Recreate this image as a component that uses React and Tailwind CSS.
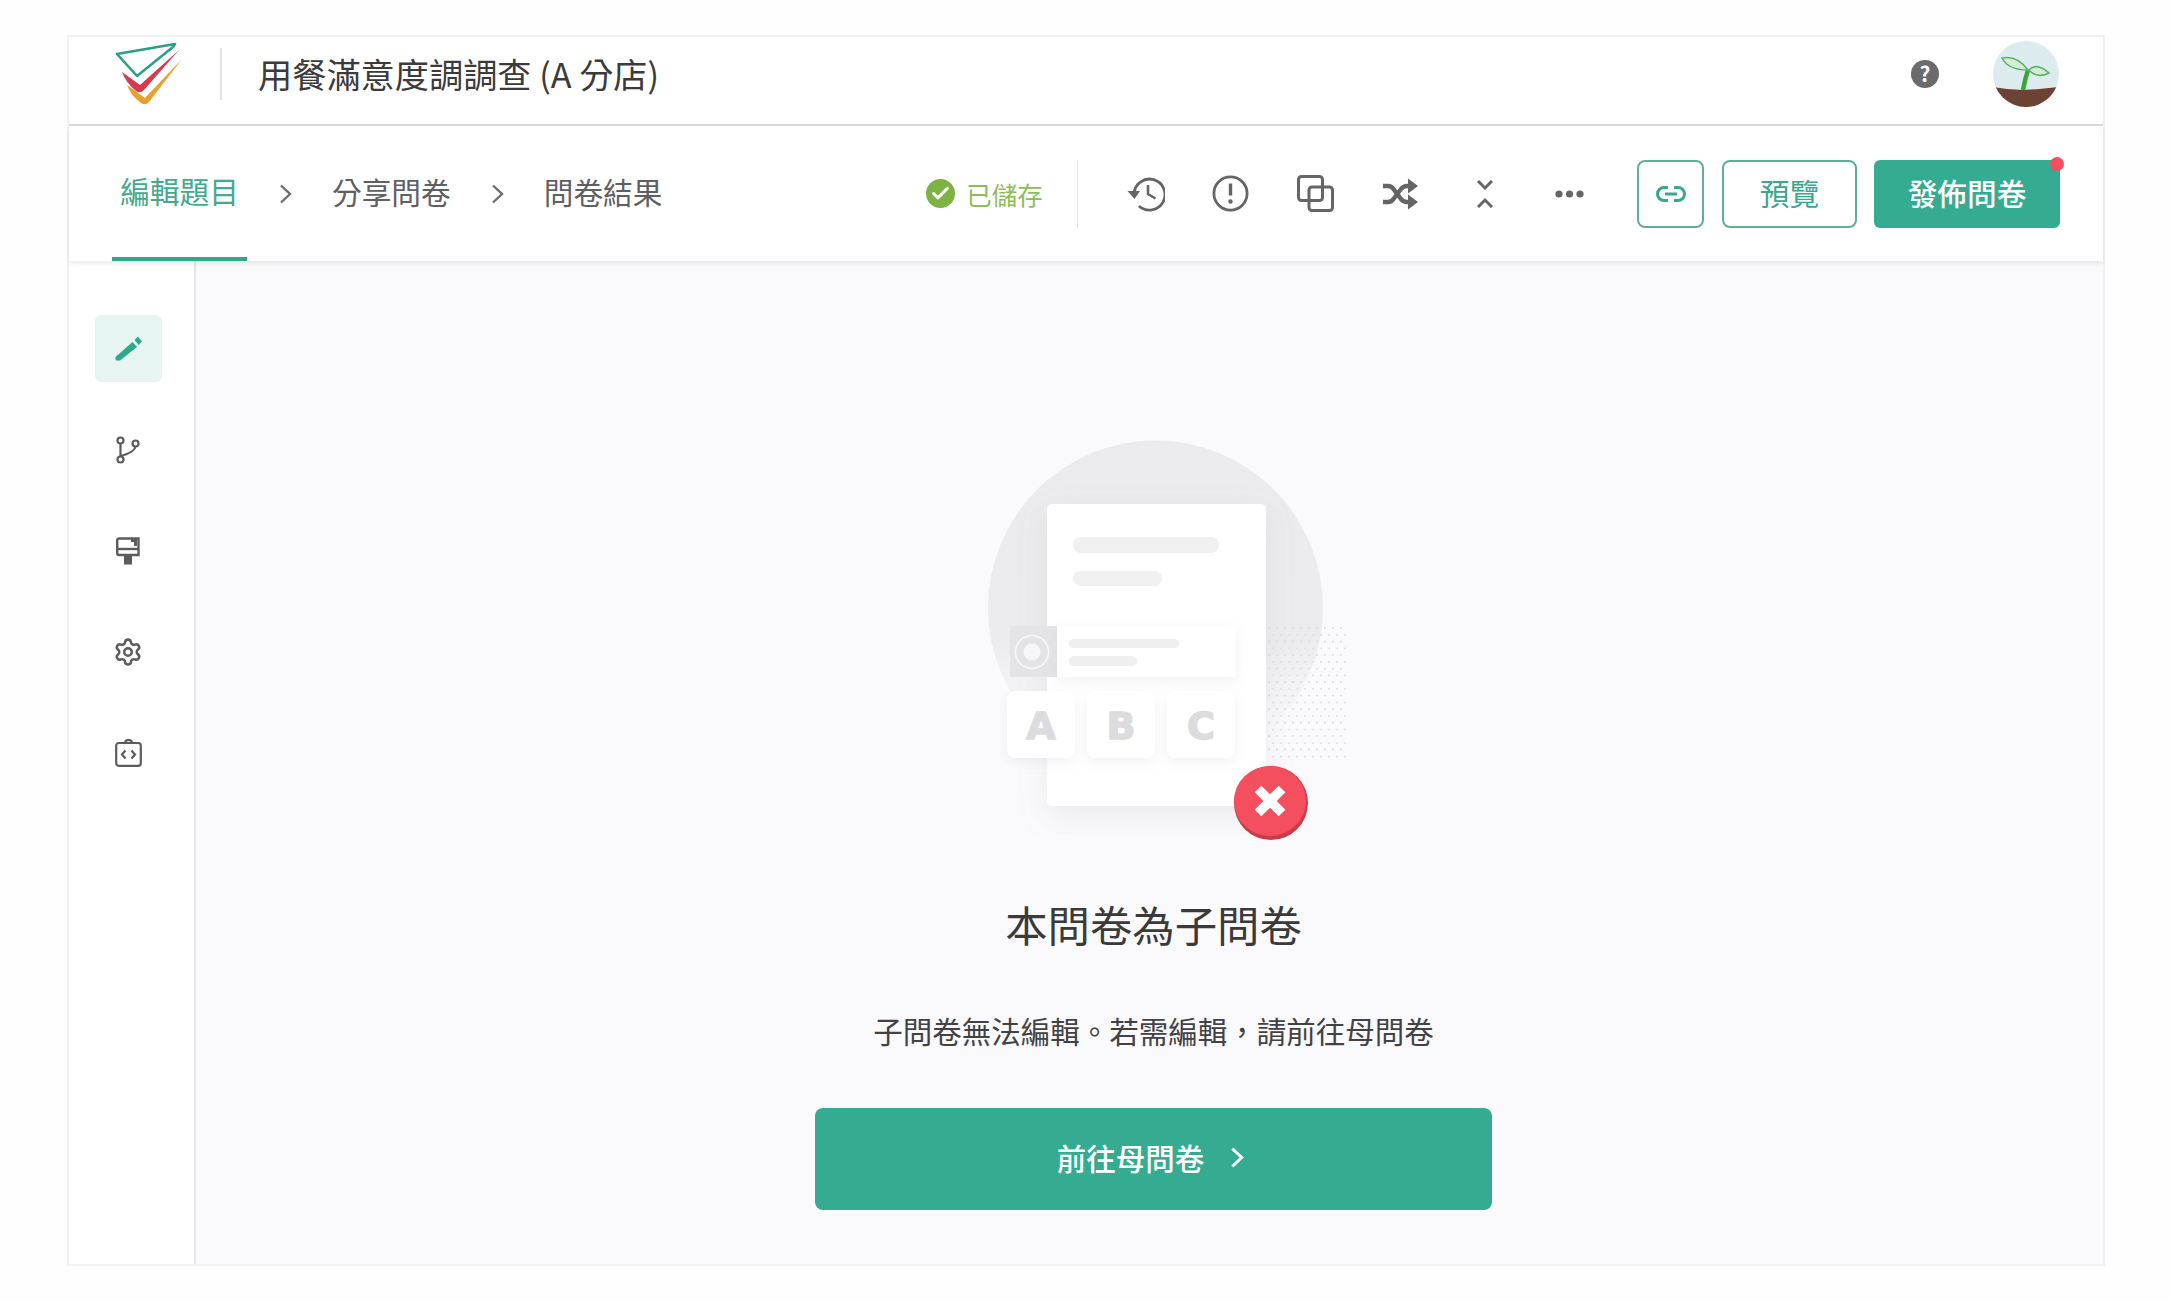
import React from "react";
import { Settings, Check } from "lucide-react";

const FONT = { fontFamily: '"Noto Sans CJK TC","Noto Sans",sans-serif' };

function Logo() {
  return (
    <svg width="67" height="62" viewBox="0 0 67 62" fill="none">
      <path d="M1 11 L59 1 L57 4 L21 33 Z" stroke="#2f9e87" strokeWidth="2.6" strokeLinejoin="round" />
      <path d="M6 29 L24 42 L63 7 L28 47 Q24 51 20 48 Q10 40 6 29Z" fill="#d8394f" />
      <path d="M11 42 L29 55 L66 16 L33 59 Q29 63 25 60 Q15 53 11 42Z" fill="#e8a02f" />
    </svg>
  );
}

function Avatar() {
  return (
    <svg width="66" height="66" viewBox="0 0 66 66">
      <defs>
        <clipPath id="av"><circle cx="33" cy="33" r="33" /></clipPath>
      </defs>
      <g clipPath="url(#av)">
        <rect width="66" height="66" fill="#dcecee" />
        <path d="M0 46 L14 48 L30 49 L46 48 L66 46 V66 H0Z" fill="#6b4233" />
        <path d="M30 49 Q32 38 35 29" stroke="#3ba53b" strokeWidth="4.5" fill="none" />
        <path d="M35 29 Q24 14 9 17 Q15 29 35 29Z" fill="#d4ebd6" stroke="#5eb36a" strokeWidth="1.6" />
        <path d="M36 29 Q44 21 56 32 Q44 38 36 29Z" fill="#d4ebd6" stroke="#5eb36a" strokeWidth="1.6" />
      </g>
    </svg>
  );
}

function Chevron({ color = "#6c6c6e", w = 13, h = 20, sw = 2.4 }) {
  return (
    <svg width={w} height={h} viewBox="0 0 13 20" fill="none" stroke={color} strokeWidth={sw}>
      <path d="M2 1.5 L11 10 L2 18.5" />
    </svg>
  );
}

function PencilIcon() {
  return (
    <svg width="27" height="25" viewBox="0 0 27 25" fill="#2fa88d">
      <path d="M0.5 21 L17.5 6 L22 11 L5 24.5 L1 24.5 Q0 24 0.5 21Z" />
      <path d="M19.5 4 L23 0.5 L27 5.5 L23.7 9Z" />
    </svg>
  );
}

function BranchIcon() {
  return (
    <svg width="24" height="28" viewBox="0 0 24 28" fill="none" stroke="#5c5c5e" strokeWidth="2.2">
      <circle cx="4.5" cy="4.5" r="3" />
      <circle cx="4.5" cy="23.5" r="3" />
      <circle cx="19.5" cy="7.5" r="3" />
      <path d="M4.5 7.5 V20.5 M19.5 10.5 Q19 16 5 20" />
    </svg>
  );
}

function RollerIcon() {
  return (
    <svg width="24" height="28" viewBox="0 0 24 28" fill="none" stroke="#5c5c5e" strokeWidth="2.4">
      <path d="M3 1.5 H22.5 V18 H3 Q1.2 18 1.2 16 V3.5 Q1.2 1.5 3 1.5Z" />
      <path d="M1.2 12 H22.5" />
      <path d="M15 2 H21 V9 H18 V5 H15Z" fill="#5c5c5e" stroke="none" />
      <rect x="8" y="18" width="8" height="9.5" fill="#5c5c5e" stroke="none" />
    </svg>
  );
}

function CodeBoardIcon() {
  return (
    <svg width="27" height="28" viewBox="0 0 27 28" fill="none" stroke="#5c5c5e" strokeWidth="2.2">
      <rect x="1.2" y="4" width="24.6" height="22.8" rx="2.5" />
      <path d="M10 4 Q10 1 13.5 1 Q17 1 17 4" />
      <path d="M10.5 11.5 L7 15.5 L10.5 19.5 M16.5 11.5 L20 15.5 L16.5 19.5" />
    </svg>
  );
}

const TOOL = "#656567";

function HistoryIcon() {
  return (
    <svg width="38" height="36" viewBox="0 0 38 36" fill="none" stroke={TOOL} strokeWidth="2.8">
      <path d="M7 18 A15.5 15.5 0 1 1 12 30" />
      <path d="M0.5 15 L13 15 L7.5 23Z" fill={TOOL} stroke="none" />
      <path d="M21 9 V18 L28.5 22.5" strokeWidth="2.6" />
    </svg>
  );
}

function AlertIcon() {
  return (
    <svg width="37" height="37" viewBox="0 0 37 37" fill="none" stroke={TOOL} strokeWidth="2.8">
      <circle cx="18.5" cy="18.5" r="16.6" />
      <path d="M18.5 8.5 V20.5" strokeWidth="3.4" />
      <circle cx="18.5" cy="26.5" r="2.2" fill={TOOL} stroke="none" />
    </svg>
  );
}

function CopyIcon() {
  return (
    <svg width="37" height="37" viewBox="0 0 37 37" fill="none" stroke={TOOL} strokeWidth="3">
      <rect x="1.5" y="1.5" width="24" height="24" rx="3" />
      <rect x="12" y="12" width="23.5" height="23.5" rx="3" />
    </svg>
  );
}

function ShuffleIcon() {
  return (
    <svg width="36" height="32" viewBox="0 0 36 32" fill="none" stroke={TOOL} strokeWidth="4.4">
      <path d="M1 8 H6 Q9.5 8 11.5 11 L19 21 Q21.5 24 25 24 H30" />
      <path d="M1 24 H6 Q9.5 24 11.5 21 L19 11 Q21.5 8 25 8 H30" />
      <path d="M26 0.5 L36 8 L26 15.5Z M26 16.5 L36 24 L26 31.5Z" fill={TOOL} stroke="none" />
    </svg>
  );
}

function CollapseIcon() {
  return (
    <svg width="16" height="28" viewBox="0 0 16 28" fill="none" stroke={TOOL} strokeWidth="3">
      <path d="M1 1 L8 8 L15 1 M1 27 L8 20 L15 27" />
    </svg>
  );
}

function DotsIcon() {
  return (
    <svg width="29" height="8" viewBox="0 0 29 8" fill={TOOL}>
      <circle cx="4" cy="4" r="3.6" />
      <circle cx="14.5" cy="4" r="3.6" />
      <circle cx="25" cy="4" r="3.6" />
    </svg>
  );
}

function LinkIcon() {
  return (
    <svg width="30" height="16" viewBox="0 0 30 16" fill="none" stroke="#3aa78f" strokeWidth="3">
      <path d="M12 1.5 H8 A6.5 6.5 0 0 0 8 14.5 H12 M18 1.5 H22 A6.5 6.5 0 0 1 22 14.5 H18 M9 8 H21" />
    </svg>
  );
}

function Illustration() {
  const dots = [];
  for (let y = 0; y < 10; y++) {
    for (let x = 0; x < 10; x++) {
      dots.push(<circle key={`${x}-${y}`} cx={291 + x * 8} cy={197 + y * 13.5} r="1.1" fill="#dcdce0" />);
      dots.push(<circle key={`b${x}-${y}`} cx={295 + x * 8} cy={204 + y * 13.5} r="1.1" fill="#e2e2e6" />);
    }
  }
  const letter = {
    fontFamily: '"DejaVu Sans",sans-serif',
    fontWeight: 700,
    fontSize: 38,
    fill: "#dcdcde",
    stroke: "#dcdcde",
    strokeWidth: 1.5,
    textAnchor: "middle",
  };
  return (
    <svg width="400" height="410" viewBox="0 0 400 410">
      <defs>
        <linearGradient id="disc" x1="0" y1="0" x2="0" y2="1">
          <stop offset="0" stopColor="#ebebed" />
          <stop offset="0.6" stopColor="#ececee" />
          <stop offset="0.85" stopColor="#f9f8fa" />
        </linearGradient>
        <filter id="soft" x="-30%" y="-30%" width="160%" height="170%">
          <feDropShadow dx="0" dy="10" stdDeviation="14" floodColor="#a0a0a8" floodOpacity="0.16" />
        </filter>
        <filter id="tile" x="-30%" y="-30%" width="160%" height="170%">
          <feDropShadow dx="0" dy="4" stdDeviation="6" floodColor="#a0a0a8" floodOpacity="0.14" />
        </filter>
      </defs>
      <circle cx="177.5" cy="177" r="167.5" fill="url(#disc)" />
      {dots}
      <rect x="69" y="73" width="219" height="302" rx="5" fill="#ffffff" filter="url(#soft)" />
      <rect x="95" y="106" width="146" height="16" rx="8" fill="#f0f0f1" />
      <rect x="95" y="140" width="89" height="15" rx="7.5" fill="#f0f0f1" />
      <rect x="32" y="195" width="47" height="51" fill="#e4e4e6" />
      <rect x="79" y="195" width="179" height="51" rx="3" fill="#ffffff" filter="url(#tile)" />
      <circle cx="54" cy="221" r="16.5" fill="none" stroke="#f7f7f8" strokeWidth="1.6" />
      <circle cx="54" cy="221" r="8.5" fill="#f7f7f8" />
      <rect x="91" y="208" width="110" height="9" rx="4.5" fill="#efeff0" />
      <rect x="91" y="225" width="68" height="10" rx="5" fill="#efeff0" />
      {[29, 109, 189].map((x, i) => (
        <g key={x}>
          <rect x={x} y="260" width="68" height="67" rx="8" fill="#ffffff" filter="url(#tile)" />
          <text x={x + 34} y="308" style={letter}>{"ABC"[i]}</text>
        </g>
      ))}
      <circle cx="293" cy="372" r="37" fill="#c93a4b" />
      <ellipse cx="292" cy="370" rx="36" ry="35" fill="#f44f5e" />
      <path d="M280 358 L304 382 M304 358 L280 382" stroke="#ffffff" strokeWidth="9.5" />
    </svg>
  );
}

const sideItems = [
  { key: "pencil", el: <PencilIcon />, active: true },
  { key: "branch", el: <BranchIcon /> },
  { key: "roller", el: <RollerIcon /> },
  { key: "gear", el: <Settings size={30} color="#5c5c5e" strokeWidth={2} /> },
  { key: "code", el: <CodeBoardIcon /> },
];

const toolIcons = [
  <HistoryIcon key="h" />,
  <AlertIcon key="a" />,
  <CopyIcon key="c" />,
  <ShuffleIcon key="s" />,
  <CollapseIcon key="x" />,
  <DotsIcon key="d" />,
];

export default function App() {
  return (
    <div style={FONT} className="w-[2172px] h-[1301px] bg-[#fefefe] pt-[35px] pl-[67px] overflow-hidden">
      <div className="w-[2038px] h-[1231px] flex flex-col border-2 border-[#f1f0f3] bg-white">
        <header className="h-[89px] shrink-0 flex items-center border-b-2 border-[#d9d9db] pb-[14px]">
          <div className="ml-[47px] w-[67px] h-[62px]">
            <Logo />
          </div>
          <div className="ml-[37px] w-[2px] h-[52px] bg-[#e4e4e6]" />
          <h1 className="ml-[36px] text-[34.2px] leading-none font-normal text-[#3b3b3b]">用餐滿意度調調查 (A 分店)</h1>
          <div className="ml-auto mr-[44px] flex items-center">
            <div className="w-[28px] h-[28px] rounded-full bg-[#6b6b6d] flex items-center justify-center text-white font-bold text-[21px] leading-none">?</div>
            <div className="ml-[54px] w-[66px] h-[66px]">
              <Avatar />
            </div>
          </div>
        </header>
        <nav className="h-[135px] shrink-0 flex items-stretch shadow-[0_3px_5px_rgba(0,0,0,0.08)] relative z-10">
          <div className="ml-[43px] w-[135px] flex items-center justify-center border-b-4 border-[#2fa88d] pb-[1px] text-[29.7px] text-[#45a98f]">編輯題目</div>
          <div className="ml-[32px] flex items-center">
            <Chevron />
          </div>
          <div className="ml-[40px] flex items-center pb-[2px] text-[29.7px] text-[#606062]">分享問卷</div>
          <div className="ml-[40px] flex items-center">
            <Chevron />
          </div>
          <div className="ml-[40px] flex items-center pb-[2px] text-[29.7px] text-[#606062]">問卷結果</div>

          <div className="ml-auto mr-[43px] flex items-center">
            <div className="w-[29px] h-[29px] rounded-full bg-[#7cb342] flex items-center justify-center">
              <Check size={21} color="#ffffff" strokeWidth={3.5} />
            </div>
            <span className="ml-[11px] text-[25.5px] leading-none text-[#8cbd5a]">已儲存</span>
            <div className="ml-[34px] w-[1.5px] h-[68px] bg-[#e4e4e6]" />
            <div className="ml-[25px] flex items-center">
              {toolIcons.map((ic, i) => (
                <div key={i} className="w-[84.8px] flex items-center justify-center">{ic}</div>
              ))}
            </div>
            <button className="ml-[25px] w-[67px] h-[68px] rounded-[8px] border-2 border-[#5fae9c] bg-white flex items-center justify-center">
              <LinkIcon />
            </button>
            <button className="ml-[18px] w-[135px] h-[68px] rounded-[8px] border-2 border-[#5fae9c] bg-white pb-[1px] text-[29.7px] text-[#3aa78f] flex items-center justify-center">預覽</button>
            <button className="relative ml-[17px] w-[186px] h-[68px] rounded-[6px] bg-[#35ab91] pb-[1px] text-[29.7px] font-medium text-white flex items-center justify-center">
              發佈問卷
              <span className="absolute -top-[3px] -right-[4px] w-[14px] h-[14px] rounded-full bg-[#f44f5e]" />
            </button>
          </div>
        </nav>
        <div className="flex-1 flex min-h-0">
          <aside className="w-[127px] shrink-0 border-r-2 border-[#e6e6e9] pt-[54px] flex flex-col items-center gap-[34.2px] bg-white pr-[7px]">
            {sideItems.map((s) => (
              <div key={s.key} className={`w-[67px] h-[67px] rounded-[6px] flex items-center justify-center shrink-0 ${s.active ? "bg-[#e6f5f2]" : ""}`}>
                {s.el}
              </div>
            ))}
          </aside>
          <main className="flex-1 min-w-0 bg-[#faf9fb] flex flex-col items-center pt-[170px] pl-[8px]">
            <div className="w-[400px] h-[410px] translate-x-[24px]">
              <Illustration />
            </div>
            <h2 className="mt-[53px] text-[42.4px] leading-[60px] font-normal text-[#3a3a3a]">本問卷為子問卷</h2>
            <p className="mt-[54px] text-[29.5px] leading-[44px] text-[#424244]">{"子問卷無法編輯。若需編輯\uFF0C請前往母問卷"}</p>
            <button className="mt-[56px] w-[677px] h-[102px] rounded-[8px] bg-[#35ab91] pb-[4px] pr-[6px] text-white text-[29.5px] font-medium flex items-center justify-center gap-[26px]">
              前往母問卷
              <Chevron color="#ffffff" w={14} h={21} sw={2.8} />
            </button>
          </main>
        </div>
      </div>
    </div>
  );
}
